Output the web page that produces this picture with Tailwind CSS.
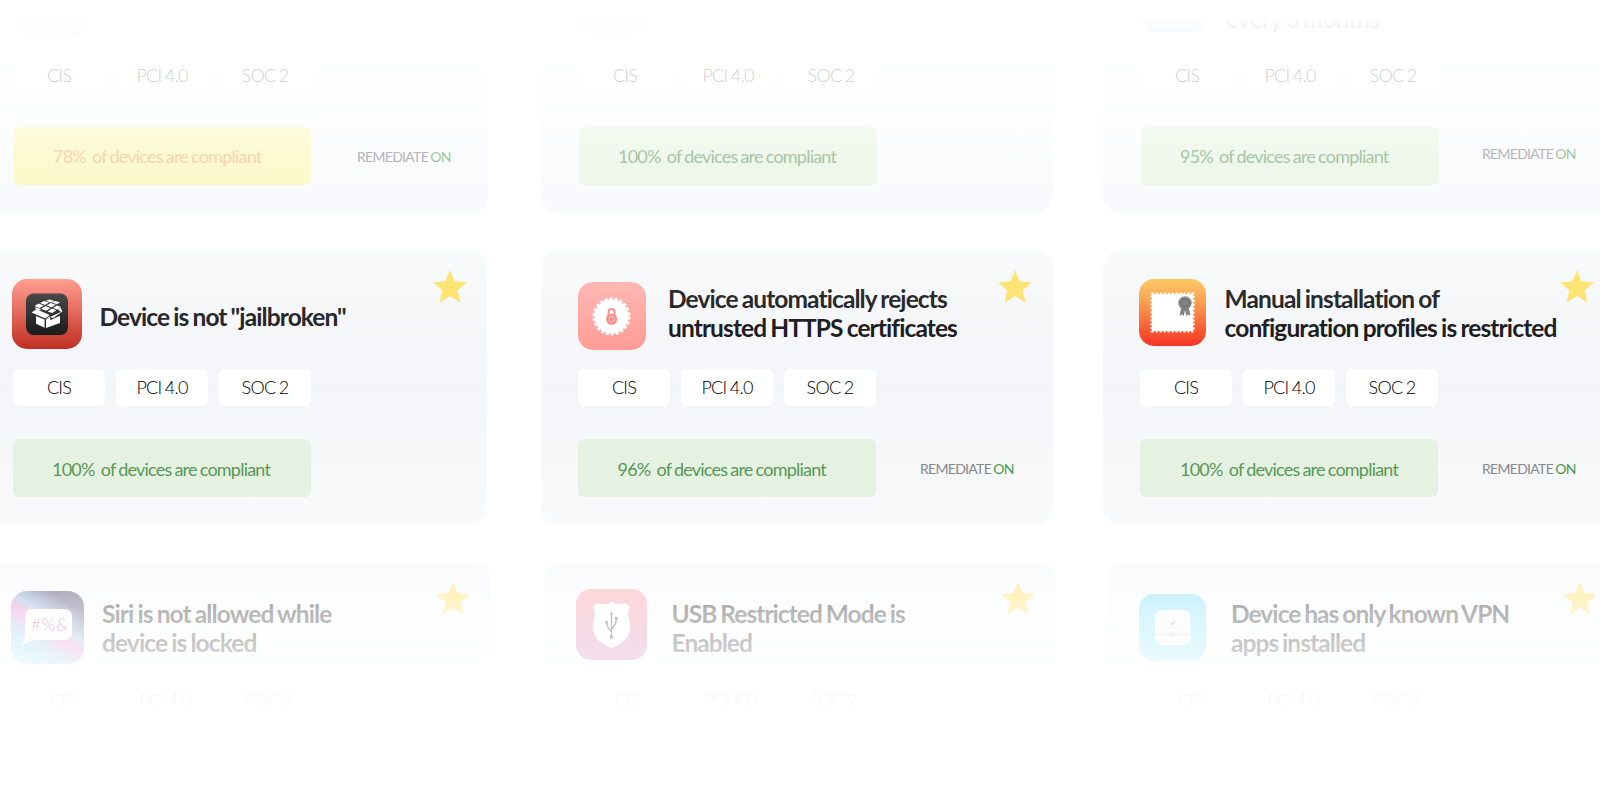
<!DOCTYPE html>
<html lang="en">
<head>
    <meta charset="UTF-8">
    <meta name="viewport" content="width=device-width, initial-scale=1.0">
    <title>Compliance Rules</title>
    <script src="https://cdn.jsdelivr.net/npm/@tailwindcss/browser@4"></script>
</head>
<body class="bg-white font-['Lato',sans-serif]">
    <!-- Shared icons -->
    <svg class="hidden">
        <symbol id="star" viewBox="0 0 34 33">
            <path fill="#ffe169" d="M17 0l4.600 11.200L34 12.400l-9.400 8 3 12.300L17 26 6.400 32.700l3-12.300L0 12.400l12.400-1.200z"/>
        </symbol>
    </svg>

    <div class="relative w-[1600px] h-[800px] overflow-hidden">
        <!-- Row 1 -->
        <div class="flex -ml-[24px] -mt-[61px] w-[1800px]">
            <div class="relative shrink-0 w-[512px] h-[273px] rounded-2xl pl-[37px] bg-linear-to-b from-white from-30% to-[#f4f6fa]">
                <div class="flex h-[118px]">
                    <div class="mt-[28px] ml-[3px] size-[70px] rounded-2xl bg-gray-200"></div>
                </div>
                <div class="flex gap-[11px] text-[18px] font-light tracking-[-0.75px] [word-spacing:-0.8px] text-black">
                    <span class="w-[92px] h-[37px] rounded-md bg-white flex items-center justify-center">CIS</span>
                    <span class="w-[92px] h-[37px] rounded-md bg-white flex items-center justify-center">PCI 4.0</span>
                    <span class="w-[92px] h-[37px] rounded-md bg-white flex items-center justify-center">SOC 2</span>
                </div>
                <div class="mt-[33px] flex items-center">
                    <div class="w-[298px] h-[58px] rounded-md bg-[#f9f5a8] pl-[40px] flex items-center text-[18px] tracking-[-0.78px] [word-spacing:-0.8px] text-[#f2ab60] whitespace-pre">78%  of devices are compliant</div>
                    <div class="ml-[46px] text-[14px] tracking-[-0.7px] [word-spacing:-0.6px] text-[#6c6c70]">REMEDIATE <span class="text-[#3f8f3f]">ON</span></div>
                </div>
            </div>
            <div class="relative shrink-0 w-[512px] h-[273px] ml-[53px] rounded-2xl pl-[38px] bg-linear-to-b from-white from-30% to-[#f4f6fa]">
                <div class="flex h-[118px]">
                    <div class="mt-[26px] size-[68px] rounded-2xl bg-gray-300"></div>
                </div>
                <div class="flex gap-[11px] text-[18px] font-light tracking-[-0.75px] [word-spacing:-0.8px] text-black">
                    <span class="w-[92px] h-[37px] rounded-md bg-white flex items-center justify-center">CIS</span>
                    <span class="w-[92px] h-[37px] rounded-md bg-white flex items-center justify-center">PCI 4.0</span>
                    <span class="w-[92px] h-[37px] rounded-md bg-white flex items-center justify-center">SOC 2</span>
                </div>
                <div class="mt-[33px] flex items-center">
                    <div class="w-[298px] h-[58px] rounded-md bg-[#e2f1db] pl-[39px] flex items-center text-[18px] tracking-[-0.78px] [word-spacing:-0.8px] text-[#4f904f] whitespace-pre">100%  of devices are compliant</div>
                </div>
            </div>
            <div class="relative shrink-0 w-[512px] h-[273px] ml-[50px] rounded-2xl pl-[38px] bg-linear-to-b from-white from-30% to-[#f4f6fa]">
                <div class="flex h-[118px]">
                    <div class="mt-[26px] size-[67px] rounded-2xl bg-[#9db6ee]"></div>
                    <h3 class="mt-[65px] ml-[18px] text-[24.5px] leading-[29.4px] font-bold tracking-[-0.9px] [word-spacing:-1px] text-[#1d1d1f]">every 6 months</h3>
                </div>
                <div class="flex gap-[11px] text-[18px] font-light tracking-[-0.75px] [word-spacing:-0.8px] text-black">
                    <span class="w-[92px] h-[37px] rounded-md bg-white flex items-center justify-center">CIS</span>
                    <span class="w-[92px] h-[37px] rounded-md bg-white flex items-center justify-center">PCI 4.0</span>
                    <span class="w-[92px] h-[37px] rounded-md bg-white flex items-center justify-center">SOC 2</span>
                </div>
                <div class="mt-[33px] flex items-center">
                    <div class="w-[298px] h-[58px] rounded-md bg-[#e2f1db] pl-[39px] flex items-center text-[18px] tracking-[-0.78px] [word-spacing:-0.8px] text-[#4f904f] whitespace-pre">95%  of devices are compliant</div>
                    <div class="ml-[43px] mb-[5px] text-[14px] tracking-[-0.7px] [word-spacing:-0.6px] text-[#6c6c70]">REMEDIATE <span class="text-[#3f8f3f]">ON</span></div>
                </div>
            </div>
        </div>

        <!-- Row 2 -->
        <div class="flex -ml-[25px] mt-[39px] w-[1800px]">
            <div class="relative shrink-0 w-[512px] h-[273px] rounded-2xl pl-[38px] bg-linear-to-b from-[#f7f9fa] via-[#f3f5f8] to-[#f8fafb]">
                <svg class="absolute left-[457.5px] top-[19px] w-[34px] h-[33px]"><use href="#star"/></svg>
                <div class="flex h-[118px]">
                    <svg class="mt-[28px] -ml-[1.5px] size-[70px]" viewBox="0 0 70 70">
                        <defs>
                            <linearGradient id="red" x2="0" y2="1"><stop stop-color="#ff9485"/><stop offset="1" stop-color="#c03024"/></linearGradient>
                            <linearGradient id="dark" x2="0" y2="1"><stop stop-color="#3b3b3b"/><stop offset="1" stop-color="#1d1d1d"/></linearGradient>
                        </defs>
                        <rect width="70" height="70" rx="15" fill="url(#red)"/>
                        <rect x="14" y="14.500" width="42" height="41.500" rx="7.500" fill="url(#dark)"/>
                        <g fill="#fff">
                            <!-- open flaps and bricks -->
                            <path d="M19.500 33.500l5-3.200 13.200 5.600-4.300 3.600z"/>
                            <path d="M37.900 38l11-5-3.400-3.200 3.400-.8 1.400 3.500-9 6.500z"/>
                            <path d="M22.500 27l4-2.400 5.200 1.800-4.200 2.600zM28 24l4-2 5 1.500-4 2.400zM33.800 21.800l3.700-1.300 5 1.400-3.700 1.600zM29 29.700l4.200-2.600 5 1.800-4 2.800zM34.600 26.400l4.200-2.300 5 1.700-4.200 2.400zM40 23.400l3.600-1.400 4.400 1.500-3.200 1.800zM35.600 32.400l4.200-2.800 4.600 1.600-4.200 2.800zM41 29l4-2.400 4 1.400-3.600 2.400z"/>
                            <path d="M23.500 30.200v-2.200l5 1.900v1.700z"/>
                            <!-- box sides -->
                            <path d="M24 37l8.600 3.500v8.300L24 44.700z"/>
                            <path d="M34 40.500l3.600-3.200 1 3.700 9.400-4.200v7.200L34 49z"/>
                        </g>
                    </svg>
                    <h3 class="mt-[51px] ml-[18px] text-[24.5px] leading-[29.4px] font-bold tracking-[-0.9px] [word-spacing:-1px] text-[#232325]">Device is not "jailbroken"</h3>
                </div>
                <div class="flex gap-[11px] text-[18px] font-light tracking-[-0.75px] [word-spacing:-0.8px] text-black">
                    <span class="w-[92px] h-[37px] rounded-md bg-white flex items-center justify-center">CIS</span>
                    <span class="w-[92px] h-[37px] rounded-md bg-white flex items-center justify-center">PCI 4.0</span>
                    <span class="w-[92px] h-[37px] rounded-md bg-white flex items-center justify-center">SOC 2</span>
                </div>
                <div class="mt-[33px] flex items-center">
                    <div class="w-[298px] h-[58px] rounded-md bg-[#e6f2e1] pl-[39px] pt-[2px] flex items-center text-[18px] tracking-[-0.78px] [word-spacing:-0.8px] text-[#579857] whitespace-pre">100%  of devices are compliant</div>
                </div>
            </div>
            <div class="relative shrink-0 w-[512px] h-[273px] ml-[54px] rounded-2xl pl-[37px] bg-linear-to-b from-[#f7f9fa] via-[#f3f5f8] to-[#f8fafb]">
                <svg class="absolute left-[457px] top-[19px] w-[34px] h-[33px]"><use href="#star"/></svg>
                <div class="flex h-[118px]">
                    <svg class="mt-[31px] size-[68px]" viewBox="0 0 68 68">
                        <defs><linearGradient id="pink" x2="0" y2="1"><stop stop-color="#ffb1ad"/><stop offset="1" stop-color="#ff9d97"/></linearGradient></defs>
                        <rect width="68" height="68" rx="15" fill="url(#pink)"/>
                        <circle cx="33.500" cy="34.500" r="17" fill="#fff"/>
                        <circle cx="33.500" cy="34.500" r="17.200" fill="none" stroke="#fff" stroke-width="3.600" stroke-dasharray="3 1.910"/>
                        <rect x="30.600" y="27" width="6" height="9" rx="3" fill="none" stroke="#f58f89" stroke-width="2"/>
                        <circle cx="33.600" cy="37.200" r="5.600" fill="#f58f89"/>
                        <circle cx="33.600" cy="37.200" r="2.800" fill="none" stroke="#ffc9c5" stroke-width=".8"/>
                    </svg>
                    <h3 class="mt-[33px] ml-[22px] text-[24.5px] leading-[29.4px] font-bold tracking-[-0.9px] [word-spacing:-1px] text-[#1d1d1f]">Device automatically rejects<br>untrusted HTTPS certificates</h3>
                </div>
                <div class="flex gap-[11px] text-[18px] font-light tracking-[-0.75px] [word-spacing:-0.8px] text-black">
                    <span class="w-[92px] h-[37px] rounded-md bg-white flex items-center justify-center">CIS</span>
                    <span class="w-[92px] h-[37px] rounded-md bg-white flex items-center justify-center">PCI 4.0</span>
                    <span class="w-[92px] h-[37px] rounded-md bg-white flex items-center justify-center">SOC 2</span>
                </div>
                <div class="mt-[33px] flex items-center">
                    <div class="w-[298px] h-[58px] rounded-md bg-[#e6f2e1] pl-[39.5px] pt-[2px] flex items-center text-[18px] tracking-[-0.78px] [word-spacing:-0.8px] text-[#579857] whitespace-pre">96%  of devices are compliant</div>
                    <div class="ml-[44px] text-[14px] tracking-[-0.7px] [word-spacing:-0.6px] text-[#88888c]">REMEDIATE <span class="text-[#4a984a]">ON</span></div>
                </div>
            </div>
            <div class="relative shrink-0 w-[512px] h-[273px] ml-[50px] rounded-2xl pl-[37px] bg-linear-to-b from-[#f7f9fa] via-[#f3f5f8] to-[#f8fafb]">
                <svg class="absolute left-[457px] top-[19px] w-[34px] h-[33px]"><use href="#star"/></svg>
                <div class="flex h-[118px]">
                    <svg class="mt-[28px] -ml-[1px] size-[67px]" viewBox="0 0 67 67">
                        <defs><linearGradient id="orange" x2="0" y2="1"><stop stop-color="#fdc353"/><stop offset=".35" stop-color="#fb9a4a"/><stop offset="1" stop-color="#f53425"/></linearGradient></defs>
                        <rect width="67" height="67" rx="15" fill="url(#orange)"/>
                        <rect x="13" y="15" width="41" height="37" fill="#fff"/>
                        <rect x="12.800" y="14.800" width="41.600" height="37.400" fill="none" stroke="#fff" stroke-width="2.400" stroke-dasharray="2.300 1.650"/>
                        <g fill="#7d7d7d">
                            <path d="M42.500 28l-2 8.600 2.600-1 1.600 1.400 1.300-6 1.300 6 1.700-1.400 2.500 1-2-8.600z"/>
                            <circle cx="46" cy="24" r="6.300"/>
                            <circle cx="46" cy="24" r="6.400" fill="none" stroke="#7d7d7d" stroke-width="1" stroke-dasharray="1.400 .8"/>
                        </g>
                        <circle cx="46" cy="24" r="3.900" fill="none" stroke="#5d5d5d" stroke-width=".7"/>
                    </svg>
                    <h3 class="mt-[33px] ml-[18.500px] text-[24.5px] leading-[29.4px] font-bold tracking-[-0.88px] [word-spacing:-1px] text-[#1d1d1f] whitespace-nowrap">Manual installation of<br>configuration profiles is restricted</h3>
                </div>
                <div class="flex gap-[11px] text-[18px] font-light tracking-[-0.75px] [word-spacing:-0.8px] text-black">
                    <span class="w-[92px] h-[37px] rounded-md bg-white flex items-center justify-center">CIS</span>
                    <span class="w-[92px] h-[37px] rounded-md bg-white flex items-center justify-center">PCI 4.0</span>
                    <span class="w-[92px] h-[37px] rounded-md bg-white flex items-center justify-center">SOC 2</span>
                </div>
                <div class="mt-[33px] flex items-center">
                    <div class="w-[298px] h-[58px] rounded-md bg-[#e6f2e1] pl-[40px] pt-[2px] flex items-center text-[18px] tracking-[-0.78px] [word-spacing:-0.8px] text-[#579857] whitespace-pre">100%  of devices are compliant</div>
                    <div class="ml-[44px] text-[14px] tracking-[-0.7px] [word-spacing:-0.6px] text-[#88888c]">REMEDIATE <span class="text-[#4a984a]">ON</span></div>
                </div>
            </div>
        </div>

        <!-- Row 3 -->
        <div class="flex -ml-[22px] mt-[39px] w-[1800px]">
            <div class="relative shrink-0 w-[512px] h-[273px] rounded-2xl pl-[38px] bg-linear-to-b from-[#f4f7fa] to-white to-50%">
                <svg class="absolute left-[457.5px] top-[19px] w-[34px] h-[33px]"><use href="#star"/></svg>
                <div class="flex h-[119px]">
                    <svg class="mt-[28px] -ml-[5.5px] size-[73px]" viewBox="0 0 73 73">
                        <defs>
                            <linearGradient id="siri" gradientUnits="userSpaceOnUse" x1="10" y1="78" x2="60" y2="5">
                                <stop offset="0" stop-color="#a4ecf6"/><stop offset=".25" stop-color="#8ed4f0"/><stop offset=".4" stop-color="#a8b4e4"/><stop offset=".53" stop-color="#f27ac8"/><stop offset=".65" stop-color="#8fb0dc"/><stop offset=".78" stop-color="#6c80ac"/><stop offset=".92" stop-color="#4f4470"/><stop offset="1" stop-color="#55496c"/>
                            </linearGradient>
                        </defs>
                        <rect width="73" height="73" rx="16" fill="url(#siri)"/>
                        <path fill="#fff" d="M21 18h33a7 7 0 0 1 7 7v17a7 7 0 0 1-7 7H24c-5 .5-10 3-14 6 2-3.500 4-7.500 4-13V25a7 7 0 0 1 7-7z"/>
                        <text x="20" y="40" font-size="17" font-weight="300" fill="#b81f94" textLength="37">#%&amp;</text>
                    </svg>
                    <h3 class="mt-[36px] ml-[18.500px] text-[24.5px] leading-[29.4px] font-bold tracking-[-0.9px] [word-spacing:-1px] text-[#1d1d1f]">Siri is not allowed while<br>device is locked</h3>
                </div>
                <div class="flex gap-[11px] text-[18px] font-light tracking-[-0.75px] [word-spacing:-0.8px] text-black">
                    <span class="w-[92px] h-[37px] rounded-md bg-white flex items-center justify-center">CIS</span>
                    <span class="w-[92px] h-[37px] rounded-md bg-white flex items-center justify-center">PCI 4.0</span>
                    <span class="w-[92px] h-[37px] rounded-md bg-white flex items-center justify-center">SOC 2</span>
                </div>
            </div>
            <div class="relative shrink-0 w-[512px] h-[273px] ml-[54px] rounded-2xl pl-[37px] bg-linear-to-b from-[#f4f7fa] to-white to-50%">
                <svg class="absolute left-[457px] top-[19px] w-[34px] h-[33px]"><use href="#star"/></svg>
                <div class="flex h-[119px]">
                    <svg class="mt-[26px] -ml-[5px] size-[71px]" viewBox="0 0 71 71">
                        <defs><linearGradient id="rose" x2="0" y2="1"><stop stop-color="#ffa6a4"/><stop offset="1" stop-color="#c85ca0"/></linearGradient></defs>
                        <rect width="71" height="71" rx="15" fill="url(#rose)"/>
                        <path fill="#fff" d="M35.500 12.500c2 2 4 2.500 6.500 2.500 3 0 6-.8 8-.5l4 4c-1.800 2.400-2.500 4.500-1.800 7.500.8 4 2 8 2 13 0 9-7.700 16-18.700 20-11-4-18.700-11-18.700-20 0-5 1.300-9 2-13 .7-3 0-5.100-1.800-7.500l4-4c2-.3 5 .5 8 .5 2.500 0 4.500-.5 6.500-2.500z"/>
                        <g fill="none" stroke="#2c2c2c" stroke-width="1.300">
                            <path d="M35.500 25v22M35.500 43.500c-.5-4-4.800-3-4.800-10M35.500 41c.5-4 4.800-3 4.800-11"/>
                        </g>
                        <g fill="#2c2c2c"><path d="M35.500 22.500l1.600 3h-3.200z"/><circle cx="35.500" cy="48" r="1.900"/><circle cx="30.700" cy="33.500" r="1.400"/><rect x="38.900" y="28" width="2.800" height="2.800"/></g>
                    </svg>
                    <h3 class="mt-[36px] ml-[24.500px] text-[24.5px] leading-[29.4px] font-bold tracking-[-0.94px] [word-spacing:-1.2px] text-[#1d1d1f]">USB Restricted Mode is<br>Enabled</h3>
                </div>
                <div class="flex gap-[11px] text-[18px] font-light tracking-[-0.75px] [word-spacing:-0.8px] text-black">
                    <span class="w-[92px] h-[37px] rounded-md bg-white flex items-center justify-center">CIS</span>
                    <span class="w-[92px] h-[37px] rounded-md bg-white flex items-center justify-center">PCI 4.0</span>
                    <span class="w-[92px] h-[37px] rounded-md bg-white flex items-center justify-center">SOC 2</span>
                </div>
            </div>
            <div class="relative shrink-0 w-[512px] h-[273px] ml-[51px] rounded-2xl pl-[37px] bg-linear-to-b from-[#f4f7fa] to-white to-50%">
                <svg class="absolute left-[456px] top-[19px] w-[34px] h-[33px]"><use href="#star"/></svg>
                <div class="flex h-[119px]">
                    <svg class="mt-[31px] -ml-[5.500px] size-[67px]" viewBox="0 0 67 67">
                        <defs><linearGradient id="sky" x2="0" y2="1"><stop stop-color="#7fdffc"/><stop offset="1" stop-color="#8ce2fb"/></linearGradient></defs>
                        <rect width="67" height="67" rx="15" fill="url(#sky)"/>
                        <rect x="16" y="16" width="35.500" height="35" rx="7" fill="#f9f7f7"/>
                        <path d="M16 40.500h35.500" stroke="#d9d6d6" stroke-width="1.500"/>
                        <circle cx="33.500" cy="28.500" r="5.500" fill="#fff" stroke="#dedede" stroke-width=".8"/>
                        <path d="M31.500 28.700l1.600 1.600 2.800-3.400" fill="none" stroke="#7a7a7a" stroke-width="1.200"/>
                        <rect x="30" y="38.500" width="7" height="4" rx="1" fill="#d5d2d2"/>
                    </svg>
                    <h3 class="mt-[36px] ml-[25.500px] text-[24.5px] leading-[29.4px] font-bold tracking-[-0.94px] [word-spacing:-1.2px] text-[#1d1d1f]">Device has only known VPN<br>apps installed</h3>
                </div>
                <div class="flex gap-[11px] text-[18px] font-light tracking-[-0.75px] [word-spacing:-0.8px] text-black">
                    <span class="w-[92px] h-[37px] rounded-md bg-white flex items-center justify-center">CIS</span>
                    <span class="w-[92px] h-[37px] rounded-md bg-white flex items-center justify-center">PCI 4.0</span>
                    <span class="w-[92px] h-[37px] rounded-md bg-white flex items-center justify-center">SOC 2</span>
                </div>
            </div>
        </div>

        <!-- Fades over the rows -->
        <div class="absolute inset-x-0 top-0 h-[230px] bg-[linear-gradient(to_bottom,#fff_18px,rgb(255_255_255/0.95)_26px,rgb(255_255_255/0.9)_34px,rgb(255_255_255/0.79)_80px,rgb(255_255_255/0.6)_130px,rgb(255_255_255/0.45)_165px,rgb(255_255_255/0.35)_212px)]"></div>
        <div class="absolute inset-x-0 top-[250px] h-[80px] bg-linear-to-b from-white/15 to-white/0"></div>
        <div class="absolute inset-x-0 top-[550px] h-[250px] bg-[linear-gradient(to_bottom,rgb(255_255_255/0.5)_0px,rgb(255_255_255/0.55)_40px,rgb(255_255_255/0.68)_62px,rgb(255_255_255/0.76)_95px,rgb(255_255_255/0.92)_140px,#fff_158px)]"></div>
    </div>
</body>
</html>
